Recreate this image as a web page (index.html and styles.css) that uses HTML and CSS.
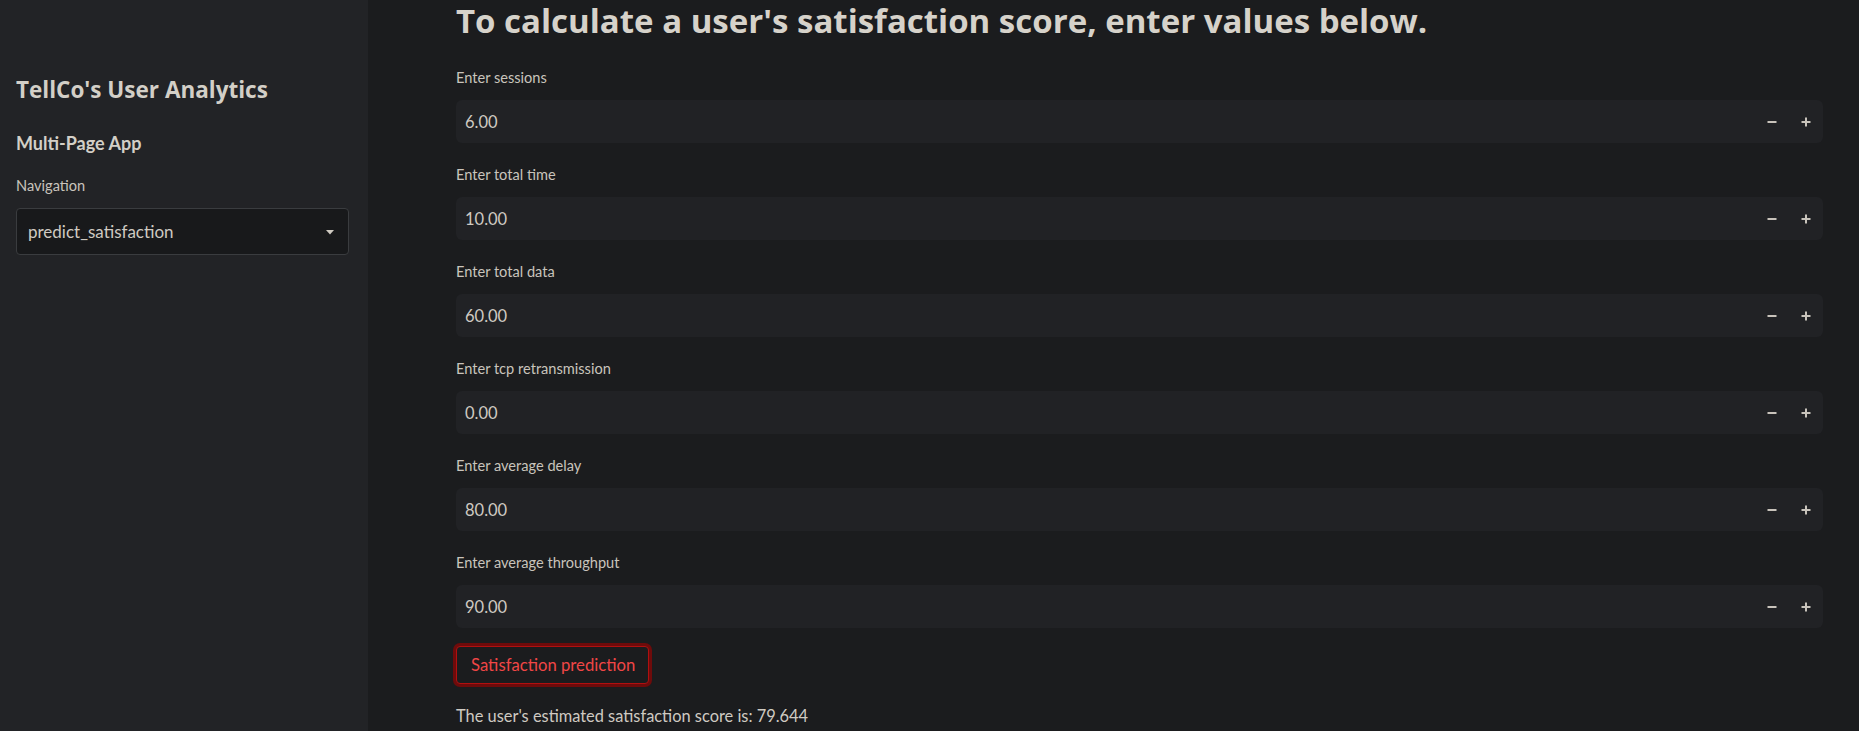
FILE: index.html
```html
<!DOCTYPE html>
<html lang="en">
<head>
<meta charset="utf-8">
<title>TellCo's User Analytics</title>
<link rel="stylesheet" href="styles.css">
</head>
<body>
<div class="app">
  <aside class="sidebar">
    <h1 class="side-title">TellCo's User Analytics</h1>
    <h3 class="side-sub">Multi-Page App</h3>
    <div class="field-label">Navigation</div>
    <div class="select">
      <span class="select-value">predict_satisfaction</span>
      <svg class="caret" width="8" height="5" viewBox="0 0 8 5"><path d="M0 0h8L4 4.5z" fill="#cfcac2"/></svg>
    </div>
  </aside>
  <main class="main">
    <h1 class="page-title">To calculate a user's satisfaction score, enter values below.</h1>
    <div class="fields">
      <div class="field">
        <div class="field-label">Enter sessions</div>
        <div class="num-input"><span class="num-value">6.00</span><span class="steps"><span class="step"><svg width="10" height="10" viewBox="0 0 10 10"><rect x="0.5" y="4" width="9" height="2" fill="#c8c3bb"/></svg></span><span class="step"><svg width="10" height="10" viewBox="0 0 10 10"><rect x="0.5" y="4" width="9" height="2" fill="#c8c3bb"/><rect x="4" y="0.5" width="2" height="9" fill="#c8c3bb"/></svg></span></span></div>
      </div>
      <div class="field">
        <div class="field-label">Enter total time</div>
        <div class="num-input"><span class="num-value">10.00</span><span class="steps"><span class="step"><svg width="10" height="10" viewBox="0 0 10 10"><rect x="0.5" y="4" width="9" height="2" fill="#c8c3bb"/></svg></span><span class="step"><svg width="10" height="10" viewBox="0 0 10 10"><rect x="0.5" y="4" width="9" height="2" fill="#c8c3bb"/><rect x="4" y="0.5" width="2" height="9" fill="#c8c3bb"/></svg></span></span></div>
      </div>
      <div class="field">
        <div class="field-label">Enter total data</div>
        <div class="num-input"><span class="num-value">60.00</span><span class="steps"><span class="step"><svg width="10" height="10" viewBox="0 0 10 10"><rect x="0.5" y="4" width="9" height="2" fill="#c8c3bb"/></svg></span><span class="step"><svg width="10" height="10" viewBox="0 0 10 10"><rect x="0.5" y="4" width="9" height="2" fill="#c8c3bb"/><rect x="4" y="0.5" width="2" height="9" fill="#c8c3bb"/></svg></span></span></div>
      </div>
      <div class="field">
        <div class="field-label">Enter tcp retransmission</div>
        <div class="num-input"><span class="num-value">0.00</span><span class="steps"><span class="step"><svg width="10" height="10" viewBox="0 0 10 10"><rect x="0.5" y="4" width="9" height="2" fill="#c8c3bb"/></svg></span><span class="step"><svg width="10" height="10" viewBox="0 0 10 10"><rect x="0.5" y="4" width="9" height="2" fill="#c8c3bb"/><rect x="4" y="0.5" width="2" height="9" fill="#c8c3bb"/></svg></span></span></div>
      </div>
      <div class="field">
        <div class="field-label">Enter average delay</div>
        <div class="num-input"><span class="num-value">80.00</span><span class="steps"><span class="step"><svg width="10" height="10" viewBox="0 0 10 10"><rect x="0.5" y="4" width="9" height="2" fill="#c8c3bb"/></svg></span><span class="step"><svg width="10" height="10" viewBox="0 0 10 10"><rect x="0.5" y="4" width="9" height="2" fill="#c8c3bb"/><rect x="4" y="0.5" width="2" height="9" fill="#c8c3bb"/></svg></span></span></div>
      </div>
      <div class="field">
        <div class="field-label">Enter average throughput</div>
        <div class="num-input"><span class="num-value">90.00</span><span class="steps"><span class="step"><svg width="10" height="10" viewBox="0 0 10 10"><rect x="0.5" y="4" width="9" height="2" fill="#c8c3bb"/></svg></span><span class="step"><svg width="10" height="10" viewBox="0 0 10 10"><rect x="0.5" y="4" width="9" height="2" fill="#c8c3bb"/><rect x="4" y="0.5" width="2" height="9" fill="#c8c3bb"/></svg></span></span></div>
      </div>
    </div>
    <button class="predict-btn" type="button">Satisfaction prediction</button>
    <p class="result">The user's estimated satisfaction score is: 79.644</p>
  </main>
</div>
</body>
</html>
```
FILE: styles.css
```css
* { box-sizing: border-box; }
html, body { margin: 0; padding: 0; }
body {
  background: #1b1c1e;
  color: #cfcac2;
  font-family: Lato, "Liberation Sans", sans-serif;
  height: 731px;
  overflow: hidden;
}
.app {
  display: flex;
  height: 731px;
}
.sidebar {
  width: 368px;
  flex: none;
  background: #222326;
  padding: 75px 19px 0 16px;
  display: flex;
  flex-direction: column;
}
.side-title {
  margin: 0;
  font-family: "Open Sans", Lato, sans-serif;
  font-size: 22.5px;
  line-height: 30px;
  font-weight: 700;
  color: #d3cfc7;
}
.side-sub {
  margin: 26px 0 0;
  font-size: 18px;
  line-height: 24px;
  font-weight: 700;
  color: #d3cfc7;
}
.sidebar .field-label { margin-top: 20px; }
.field-label {
  font-size: 14.6px;
  line-height: 21px;
  color: #c9c4bc;
  margin-bottom: 12px;
}
.select {
  height: 47px;
  background: #18191b;
  border: 1px solid #3a3c3f;
  border-radius: 4px;
  display: flex;
  align-items: center;
  justify-content: space-between;
  padding: 0 14px 0 11px;
}
.select-value {
  font-size: 17px;
  color: #cfcac2;
}
.caret { margin-top: 2px; }
.main {
  flex: 1;
  padding: 1px 36px 0 88px;
  display: flex;
  flex-direction: column;
  align-items: flex-start;
}
.page-title {
  margin: 0 0 26px;
  font-family: "Open Sans", Lato, sans-serif;
  font-size: 33px;
  line-height: 40px;
  font-weight: 700;
  color: #d6d2ca;
  white-space: nowrap;
}
.fields {
  width: 100%;
  display: flex;
  flex-direction: column;
  gap: 21px;
}
.num-input {
  height: 43px;
  background: #212225;
  border-radius: 6px;
  display: flex;
  align-items: center;
  justify-content: space-between;
  padding: 0 0 0 9px;
}
.num-value {
  font-size: 16.5px;
  color: #cfcac2;
}
.steps {
  display: flex;
  align-items: center;
}
.step {
  width: 34px;
  height: 43px;
  display: flex;
  align-items: center;
  justify-content: center;
}
.predict-btn {
  margin-top: 18px;
  height: 38px;
  padding: 0 13px 0 14px;
  background: #1b1c1e;
  border: 1px solid #b01010;
  border-radius: 4px;
  box-shadow: 0 0 0 3px #6e0b0b;
  color: #f04646;
  font-family: inherit;
  font-size: 16.7px;
  line-height: 20px;
}
.result {
  margin: 20px 0 0;
  font-size: 16.4px;
  line-height: 24px;
  color: #cfcac2;
}
```
